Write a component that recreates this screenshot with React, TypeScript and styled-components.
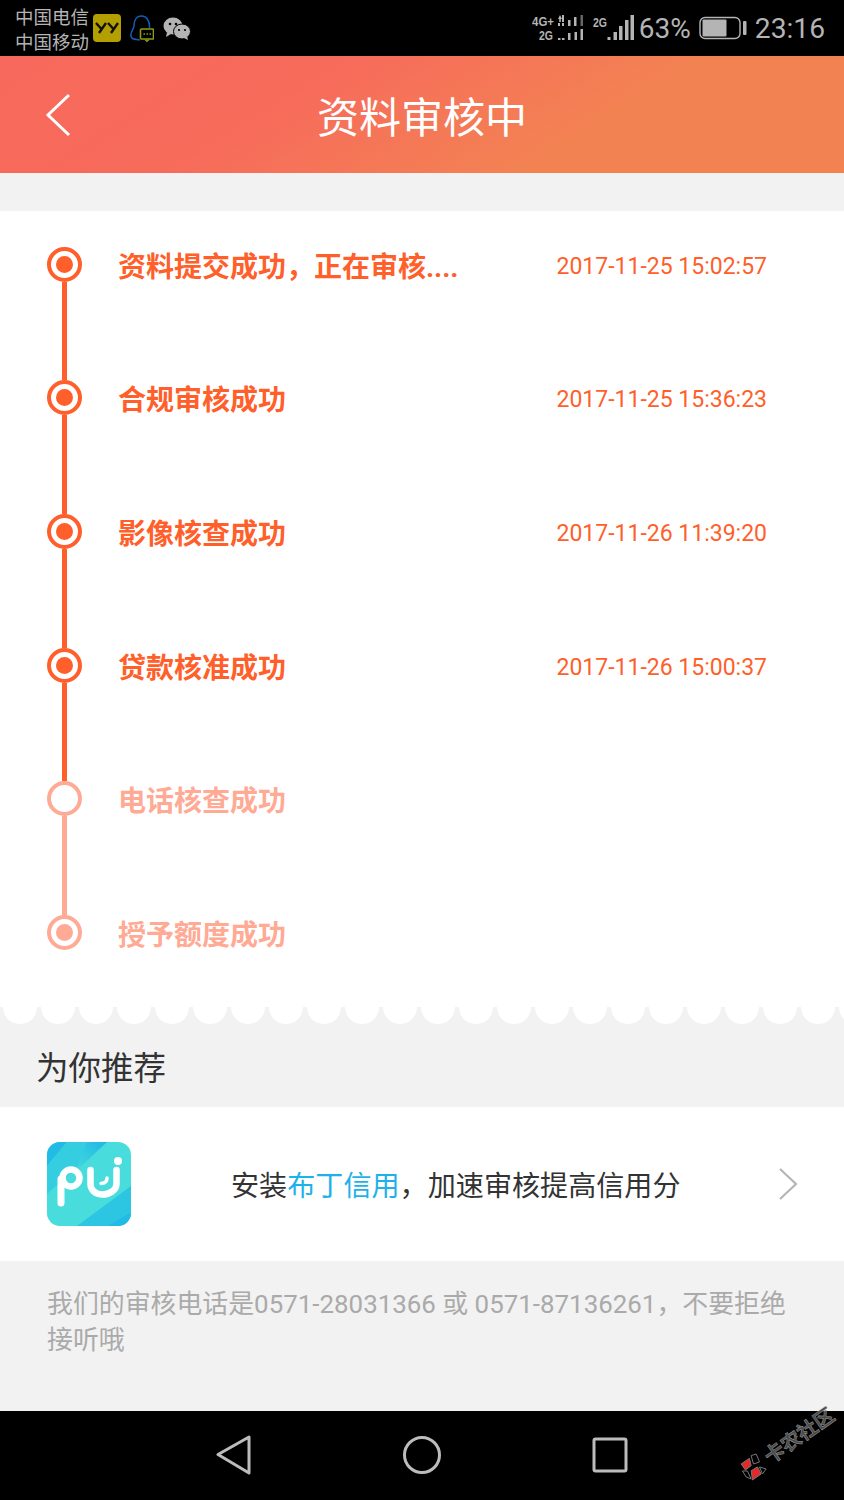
import React from 'react'
import styled, { createGlobalStyle } from 'styled-components'

const ORANGE = '#ff5f2b'
const FADED = '#ffaa94'
const CJK = '"Roboto", "Noto Sans CJK SC", sans-serif'

interface StepData {
  label: string
  time?: string
  dot: boolean
  done: boolean
  lineDone?: boolean
}

const steps: StepData[] = [
  { label: '资料提交成功，正在审核....', time: '2017-11-25 15:02:57', dot: true, done: true, lineDone: true },
  { label: '合规审核成功', time: '2017-11-25 15:36:23', dot: true, done: true, lineDone: true },
  { label: '影像核查成功', time: '2017-11-26 11:39:20', dot: true, done: true, lineDone: true },
  { label: '贷款核准成功', time: '2017-11-26 15:00:37', dot: true, done: true, lineDone: true },
  { label: '电话核查成功', dot: false, done: false, lineDone: false },
  { label: '授予额度成功', dot: true, done: false },
]

const App: React.FC = () => {
  return (
    <Page>
      <GlobalStyle />
      <StatusBar>
        <StatusLeft>
          <Carriers>
            <span>中国电信</span>
            <span>中国移动</span>
          </Carriers>
          <YyBadge>
            <svg width="24" height="12" viewBox="0 0 24 12" fill="none" stroke="#111" strokeWidth="2.4">
              <path d="M1 1l5 5.500M11 1L4 11M13 1l5 5.500M23 1l-7 10" />
            </svg>
          </YyBadge>
          <svg width="24" height="28" viewBox="0 0 24 28" fill="none">
            <path d="M19.500 14C20 8 17 2 11.500 2 6 2 4 7 4 12c0 3-4 6-3 10 1 4 4 3 9 4" stroke="#0f5fb8" strokeWidth="1.500" />
            <rect x="10.500" y="15" width="13" height="10" rx="1" fill="#000" stroke="#8c9c14" strokeWidth="1.600" />
            <path d="M13.500 20h1.500M16.500 20h1.500M19.500 20h1.500" stroke="#8c9c14" strokeWidth="1.600" />
            <path d="M15 25.500l2 2 2-2" stroke="#8c9c14" strokeWidth="1.200" />
          </svg>
          <svg width="28" height="24" viewBox="0 0 28 24">
            <ellipse cx="10" cy="10" rx="9.500" ry="8.500" fill="#b4b4b4" />
            <path d="M4 16l-1 5 5-3z" fill="#b4b4b4" />
            <ellipse cx="19" cy="15.500" rx="8.500" ry="7.500" fill="#b4b4b4" stroke="#000" strokeWidth="1" />
            <path d="M24 20l1 4-4-2z" fill="#b4b4b4" />
            <circle cx="7" cy="8" r="1.300" fill="#000" />
            <circle cx="13" cy="8" r="1.300" fill="#000" />
            <circle cx="16" cy="14" r="1.100" fill="#000" />
            <circle cx="22" cy="14" r="1.100" fill="#000" />
          </svg>
        </StatusLeft>
        <StatusRight>
          <svg width="52" height="30" viewBox="0 0 52 30" fill="#b4b4b4">
            <text x="0" y="13" fontSize="13" fontWeight="700" fontFamily="Liberation Sans, sans-serif" textLength="22" lengthAdjust="spacingAndGlyphs">4G+</text>
            <text x="7" y="27" fontSize="13" fontWeight="700" fontFamily="Liberation Sans, sans-serif" textLength="14" lengthAdjust="spacingAndGlyphs">2G</text>
            <path d="M26 6l2-4 2 4h-1.200v3h-1.600V6zM30 2h2v7h-2zM26 10h2v3h-2zM30 10h2v3h-2z" />
            <rect x="36" y="7" width="2.500" height="6" />
            <rect x="42" y="4" width="2.500" height="9" />
            <rect x="48.500" y="2" width="2.500" height="11" fill="#666" />
            <rect x="26" y="25" width="2.500" height="2" />
            <rect x="30" y="25" width="2.500" height="2" />
            <rect x="36" y="20" width="2.500" height="7" />
            <rect x="42.500" y="19" width="2.500" height="8" />
            <rect x="48.500" y="16" width="2.500" height="11" />
          </svg>
          <Sim>
            <svg width="42" height="30" viewBox="0 0 42 30" fill="#b4b4b4">
              <text x="0" y="14" fontSize="13" fontWeight="700" fontFamily="Liberation Sans, sans-serif" textLength="14" lengthAdjust="spacingAndGlyphs">2G</text>
              <rect x="14.500" y="24" width="3" height="3" />
              <rect x="20.500" y="19" width="3.500" height="8" />
              <rect x="26" y="13" width="3.500" height="14" />
              <rect x="32" y="7" width="3.500" height="20" />
              <rect x="37.500" y="2" width="3.500" height="25" />
            </svg>
          </Sim>
          <Percent>63%</Percent>
          <Battery>
            <svg width="48" height="24" viewBox="0 0 48 24" fill="none">
              <rect x="1" y="1.500" width="40" height="21" rx="5" stroke="#b4b4b4" strokeWidth="1.400" />
              <rect x="3.500" y="3.500" width="24" height="17" rx="1" fill="#b4b4b4" />
              <rect x="44" y="5" width="3.500" height="14" rx="1" fill="#b4b4b4" />
            </svg>
          </Battery>
          <Clock>23:16</Clock>
        </StatusRight>
      </StatusBar>

      <Header>
        <BackButton>
          <svg width="26" height="44" viewBox="0 0 26 44" fill="none" stroke="#fff" strokeWidth="3">
            <path d="M24 2L3 22l21 20" />
          </svg>
        </BackButton>
        <Title>资料审核中</Title>
      </Header>

      <Timeline>
        {steps.map((step) => (
          <Step key={step.label}>
            <Rail>
              <Node $done={step.done} $dot={step.dot} />
              {step.lineDone !== undefined && <Connector $done={step.lineDone} />}
            </Rail>
            <StepLabel $done={step.done}>{step.label}</StepLabel>
            {step.time && <StepTime>{step.time}</StepTime>}
          </Step>
        ))}
      </Timeline>
      <Scallop />

      <SectionTitle>为你推荐</SectionTitle>

      <Promo>
        <svg width="84" height="84" viewBox="0 0 84 84">
          <defs>
            <clipPath id="pudingClip">
              <rect width="84" height="84" rx="13" />
            </clipPath>
            <linearGradient id="pudingCorner" x1="1" y1="0" x2="0" y2="1">
              <stop offset="0" stopColor="#1fb6e6" />
              <stop offset="1" stopColor="#45dcdc" />
            </linearGradient>
          </defs>
          <g clipPath="url(#pudingClip)">
            <rect width="84" height="84" fill="#48dcdc" />
            <path d="M0 0h20L0 24z" fill="#22bbe5" />
            <path d="M20 0h38L0 52V24z" fill="#35cde0" />
            <path d="M40 0h20L28 30z" fill="url(#pudingCorner)" />
            <path d="M84 44v26L60 84H30z" fill="#2cc6e2" />
            <path d="M84 70v14H60z" fill="#22bbe5" />
          </g>
          <g fill="none" stroke="#fff" strokeLinecap="round">
            <path d="M14 61V37" strokeWidth="7" />
            <circle cx="24" cy="36" r="8.500" strokeWidth="6.500" />
            <path d="M43.500 28v14c0 6 5 10.500 12 10.500s14-4.500 14-10.500V28" strokeWidth="6.500" />
            <path d="M60 36c0 4-2 5.500-6 5.500" strokeWidth="3.500" />
          </g>
          <circle cx="71" cy="19" r="4" fill="#fff" />
        </svg>
        <PromoText>
          安装<PromoLink>布丁信用</PromoLink>，加速审核提高信用分
        </PromoText>
        <svg width="20" height="34" viewBox="0 0 20 34" fill="none" stroke="#b5b5b5" strokeWidth="2.200">
          <path d="M2 2l16 15L2 32" />
        </svg>
      </Promo>

      <Notice>我们的审核电话是0571-28031366 或 0571-87136261，不要拒绝接听哦</Notice>

      <NavBar>
        <NavCell>
          <svg width="36" height="40" viewBox="0 0 36 40" fill="none" stroke="#bcbcbc" strokeWidth="3" strokeLinejoin="round">
            <path d="M33 2v36L2 19.500z" />
          </svg>
        </NavCell>
        <NavCell>
          <svg width="40" height="40" viewBox="0 0 40 40" fill="none" stroke="#bcbcbc" strokeWidth="3">
            <circle cx="20" cy="20" r="17.500" />
          </svg>
        </NavCell>
        <NavCell>
          <svg width="36" height="36" viewBox="0 0 36 36" fill="none" stroke="#bcbcbc" strokeWidth="3" strokeLinejoin="round">
            <rect x="2" y="2" width="32" height="32" rx="1.500" />
          </svg>
        </NavCell>
        <Watermark>
          <svg width="28" height="28" viewBox="0 0 28 28" stroke="#777">
            <g transform="rotate(35 14 14)">
              <path d="M1.700 10L10 4.300l1.700 7.400L6 16z" fill="#e22a2a" />
              <path d="M11.700 16.700L18 13l3.700 7L13 26z" fill="#e22a2a" />
              <path d="M11.700 1.700L16.700 0 20 8l-6 2zM3 17h5l3.700 8-5-2zM20 13l6.700 2-3.700 5z" fill="#000" />
            </g>
          </svg>
          <WatermarkText>卡农社区</WatermarkText>
        </Watermark>
      </NavBar>
    </Page>
  )
}

const GlobalStyle = createGlobalStyle`
  html, body {
    margin: 0;
    padding: 0;
    background: #f2f2f2;
  }
`

const Page = styled.div`
  width: 844px;
  height: 1500px;
  display: flex;
  flex-direction: column;
  overflow: hidden;
  background: #f2f2f2;
  font-family: ${CJK};
`

const StatusBar = styled.div`
  height: 56px;
  flex: none;
  background: #000;
  color: #b4b4b4;
  display: flex;
  align-items: center;
  justify-content: space-between;
  padding: 0 19px 0 15px;
`

const StatusLeft = styled.div`
  display: flex;
  align-items: center;
  gap: 9px;
`

const Carriers = styled.div`
  display: flex;
  flex-direction: column;
  width: 69px;
  white-space: nowrap;
  font-size: 18.500px;
  line-height: 25px;
  margin-top: 5px;
`

const YyBadge = styled.div`
  width: 28px;
  height: 28px;
  border-radius: 4px;
  background: #b3a000;
  display: flex;
  align-items: center;
  justify-content: center;
`

const StatusRight = styled.div`
  display: flex;
  align-items: center;
`

const Sim = styled.div`
  display: flex;
  margin-left: 9px;
`

const Percent = styled.span`
  font-family: Roboto, sans-serif;
  font-size: 28px;
  margin-left: 4px;
`

const Battery = styled.div`
  display: flex;
  margin-left: 8px;
`

const Clock = styled.span`
  font-family: Roboto, sans-serif;
  font-size: 28.200px;
  margin-left: 8px;
`

const Header = styled.div`
  position: relative;
  height: 117px;
  flex: none;
  display: flex;
  align-items: center;
  justify-content: center;
  background: linear-gradient(148deg, #f7695c 0%, #f76b5b 34%, #f38253 68%, #f38253 100%);
`

const BackButton = styled.div`
  position: absolute;
  left: 45px;
  top: 37px;
  display: flex;
`

const Title = styled.h1`
  margin: 0;
  font-size: 42px;
  font-weight: 400;
  color: #fff;
`

const Timeline = styled.div`
  margin-top: 38px;
  background: #fff;
  padding: 35.500px 77px 34px 47px;
  flex: none;
`

const Step = styled.div`
  display: grid;
  grid-template-columns: 35px 1fr auto;
  column-gap: 36px;
  height: 133.700px;

  &:last-child {
    height: 35px;
    padding-bottom: 23px;
  }
`

const Rail = styled.div`
  display: flex;
  flex-direction: column;
  align-items: center;
  height: 100%;
`

const Node = styled.div<{ $done: boolean; $dot: boolean }>`
  width: 35px;
  height: 35px;
  flex: none;
  box-sizing: border-box;
  border-radius: 50%;
  border: 4px solid ${(p) => (p.$done ? ORANGE : FADED)};
  display: flex;
  align-items: center;
  justify-content: center;

  &::after {
    content: '';
    display: ${(p) => (p.$dot ? 'block' : 'none')};
    width: 17px;
    height: 17px;
    border-radius: 50%;
    background: ${(p) => (p.$done ? ORANGE : FADED)};
  }
`

const Connector = styled.div<{ $done: boolean }>`
  width: 5px;
  flex: 1;
  background: ${(p) => (p.$done ? ORANGE : FADED)};
`

const StepLabel = styled.div<{ $done: boolean }>`
  font-size: 28px;
  font-weight: 700;
  line-height: 42px;
  color: ${(p) => (p.$done ? ORANGE : FADED)};
  white-space: nowrap;
`

const StepTime = styled.div`
  font-family: Roboto, sans-serif;
  font-size: 23px;
  line-height: 39px;
  color: ${ORANGE};
  white-space: nowrap;
`

const Scallop = styled.div`
  height: 17px;
  flex: none;
  background-image: radial-gradient(circle at 19px 0, #fff 16.500px, transparent 17.500px);
  background-size: 38px 17px;
  background-position: 1px 0;
  background-repeat: repeat-x;
`

const SectionTitle = styled.div`
  height: 83px;
  flex: none;
  display: flex;
  align-items: center;
  padding-left: 36px;
  box-sizing: border-box;
  font-size: 32.500px;
  color: #333;
`

const Promo = styled.div`
  height: 154px;
  flex: none;
  background: #fff;
  display: flex;
  align-items: center;
  padding: 0 46px 0 47px;
  box-sizing: border-box;
`

const PromoText = styled.div`
  flex: 1;
  padding-left: 100px;
  font-size: 28.100px;
  color: #333;
  white-space: nowrap;
`

const PromoLink = styled.span`
  color: #1fb1e9;
`

const Notice = styled.div`
  height: 150px;
  flex: none;
  box-sizing: border-box;
  padding: 25px 47px 0;
  font-size: 25.900px;
  line-height: 36px;
  color: #aaa;
`

const NavBar = styled.div`
  position: relative;
  height: 89px;
  flex: none;
  background: #000;
  display: flex;
  justify-content: center;
  align-items: center;
`

const NavCell = styled.div`
  width: 188px;
  display: flex;
  justify-content: center;
`

const Watermark = styled.div`
  position: absolute;
  left: 742px;
  top: 51px;
  display: flex;
  align-items: center;
  gap: 2px;
  transform: rotate(-35deg);
  transform-origin: left center;
`

const WatermarkText = styled.span`
  font-size: 20px;
  line-height: 28px;
  font-weight: 700;
  color: #4a4a4a;
  white-space: nowrap;
  -webkit-text-stroke: 0.5px #999;
`

export default App
